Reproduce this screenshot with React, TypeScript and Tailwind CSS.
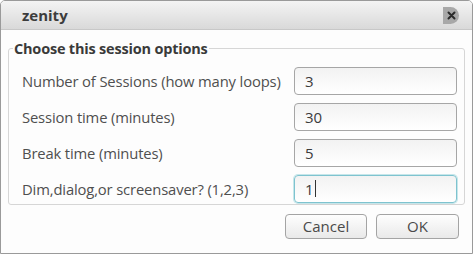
import React from 'react';

const rows = [
  { label: 'Number of Sessions (how many loops)', value: '3' },
  { label: 'Session time (minutes)', value: '30' },
  { label: 'Break time (minutes)', value: '5' },
  { label: 'Dim,dialog,or screensaver? (1,2,3)', value: '1', focus: true },
];

const App: React.FC = () => {
  return (
    <div className="w-[474px] h-[255px] bg-white" style={{ fontFamily: '"Open Sans", "DejaVu Sans", sans-serif' }}>
      <div className="w-[473px] h-[254px] flex flex-col border border-[#9a9a9a] rounded-t-[5px] overflow-hidden bg-[#fdfdfd]">
        {/* title bar */}
        <div className="h-[29px] shrink-0 flex items-center justify-between pl-[21px] pr-[13px] bg-gradient-to-b from-[#f4f4f4] to-[#d9d9d9] border-b border-[#c8c8c8]">
          <span className="text-[15px] font-bold text-[#3c3c3c]">zenity</span>
          <div className="w-[16px] h-[17px] rounded-r-full rounded-l-[2px] bg-[#a8a8a8] flex items-center justify-center">
            <svg width="9" height="9" viewBox="0 0 9 9">
              <path d="M1.5 1.5 L7.5 7.5 M7.5 1.5 L1.5 7.5" stroke="#2a2a2a" strokeWidth="2" strokeLinecap="round" />
            </svg>
          </div>
        </div>

        {/* body */}
        <div className="flex-1 flex flex-col px-[7px] pt-[8px]">
          <fieldset className="border border-[#d6d6d6] rounded-[3px] pl-[13px] pr-[7px] pb-[1px] pt-[7px]">
            <legend className="text-[14.5px] font-bold text-[#3a3a3a] px-[1px] -ml-[9px] tracking-[-0.2px]">Choose this session options</legend>
            <div className="flex flex-col gap-[8px]">
              {rows.map((r) => (
                <div key={r.label} className="flex items-center justify-between h-[28px]">
                  <span className="text-[14.8px] text-[#4f4f4f] tracking-[-0.15px]">{r.label}</span>
                  <div
                    className={`w-[163px] h-[28px] rounded-[4px] border flex items-center pl-[10px] text-[15px] text-[#3c3c3c] bg-gradient-to-b from-[#f2f2f2] to-white ${
                      r.focus ? 'border-[#7ec3cf] shadow-[0_0_0_1px_#c6e6ea]' : 'border-[#a6a6a6]'
                    }`}
                  >
                    {r.value}
                    {r.focus && <span className="w-px h-[17px] bg-[#333] ml-[1px]" />}
                  </div>
                </div>
              ))}
            </div>
          </fieldset>

          <div className="flex justify-end gap-[9px] pr-[6px] mt-[9px]">
            <button className="w-[82px] h-[25px] rounded-[4px] border border-[#a4a4a4] bg-gradient-to-b from-[#fefefe] to-[#e9e9e9] text-[15px] text-[#4a4a4a]">
              Cancel
            </button>
            <button className="w-[83px] h-[25px] rounded-[4px] border border-[#a4a4a4] bg-gradient-to-b from-[#fefefe] to-[#e9e9e9] text-[15px] text-[#4a4a4a]">
              OK
            </button>
          </div>
        </div>
      </div>
    </div>
  );
};

export default App;
